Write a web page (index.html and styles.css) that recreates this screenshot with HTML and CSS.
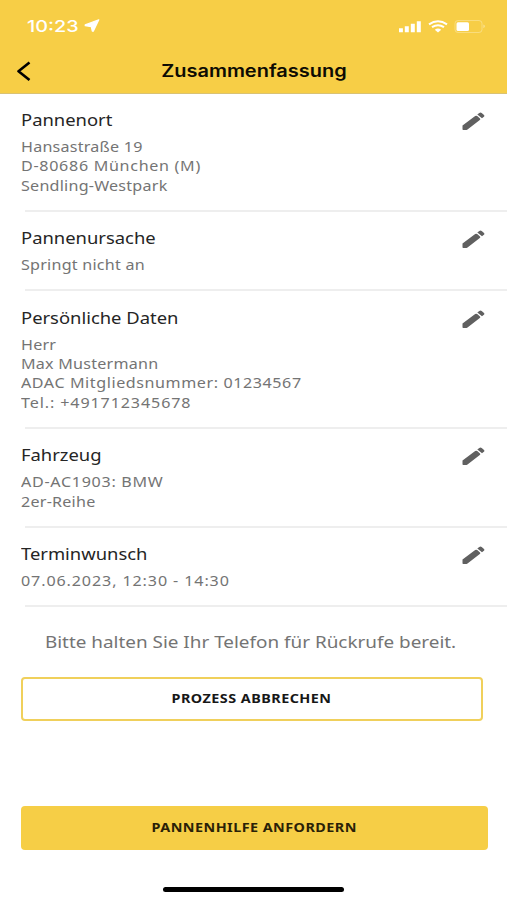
FILE: index.html
```html
<!DOCTYPE html>
<html lang="de">
<head>
<meta charset="utf-8">
<title>Zusammenfassung</title>
<link rel="stylesheet" href="styles.css">
</head>
<body>
<svg class="defs" width="0" height="0"><symbol id="pencil" viewBox="0 0 24 20"><path d="M1.500 14.600 14.200 5Q15.200 4.300 16.200 5.100L19 7.600Q19.800 8.300 18.800 9.100L6.500 18.400Q5.700 19 4.500 19H2.300Q1.500 19 1.500 18.200Z"/><path d="M16.300 3.500 18.300 2Q19.500 1.100 20.700 2L23 3.900Q24 4.800 22.900 5.700L21 7.200Z"/></symbol></svg>
<header class="top">
  <div class="status">
    <span class="time"><span class="stretch">10:23</span></span>
    <svg class="location" viewBox="0 0 16 13"><path d="M14.800.8 9.300 12.200H8.300L7.300 7.600 1.200 6.700V5.900Z"/></svg>
    <svg class="signals" viewBox="0 0 88 16"><path d="M1 10.200h3.900v4H1zM6.800 8.300h4v5.900h-4zM12.800 5.700h4v8.500h-4zM18.800 3.200h4v11h-4z"/><g fill="none" stroke="#fff" stroke-width="2"><path d="M31 6.300q9-6 18 0M34 9.200q6-4 12 0"/></g><path d="M36.800 11.700q3.200-2.200 6.400 0L40 14.500z"/><rect class="shell" x="57" y="2.500" width="27" height="12" rx="3"/><rect x="58.500" y="4.300" width="12.500" height="8.700" rx="1.500"/><path class="nub" d="M85.500 6.500q2.500 1.500 0 3.700z"/></svg>
  </div>
  <div class="nav">
    <svg class="back" viewBox="0 0 16 20"><path d="M13.500 1.500 2.500 10.300 13.500 19"/></svg>
    <h1><span class="stretch">Zusammenfassung</span></h1>
  </div>
</header>
<main>
  <section class="row"><div class="text"><h2>Pannenort</h2><p>Hansastraße 19<br><span class="code">D-80686 München (M)</span><br>Sendling-Westpark</p></div><svg class="edit"><use href="#pencil"/></svg></section>
  <section class="row"><div class="text"><h2>Pannenursache</h2><p>Springt nicht an</p></div><svg class="edit"><use href="#pencil"/></svg></section>
  <section class="row"><div class="text"><h2>Persönliche Daten</h2><p>Herr<br>Max Mustermann<br><span class="member">ADAC Mitgliedsnummer: 01234567</span><br><span class="digits">Tel.: +491712345678</span></p></div><svg class="edit"><use href="#pencil"/></svg></section>
  <section class="row"><div class="text"><h2>Fahrzeug</h2><p><span class="code">AD-AC1903: BMW</span><br>2er-Reihe</p></div><svg class="edit"><use href="#pencil"/></svg></section>
  <section class="row"><div class="text"><h2>Terminwunsch</h2><p><span class="digits">07.06.2023, 12:30 - 14:30</span></p></div><svg class="edit"><use href="#pencil"/></svg></section>
  <p class="hint"><span class="stretch">Bitte halten Sie Ihr Telefon für Rückrufe bereit.</span></p>
  <button class="cancel"><span class="stretch">PROZESS ABBRECHEN</span></button>
</main>
<footer>
  <button class="request"><span class="stretch">PANNENHILFE ANFORDERN</span></button>
  <div class="home"></div>
</footer>
</body>
</html>
```
FILE: styles.css
```css
* { box-sizing: border-box; margin: 0; padding: 0; }
body { width: 507px; height: 900px; overflow: hidden; display: flex; flex-direction: column; background: #fff; font-family: "Noto Sans", sans-serif; color: #252525; }
.defs { position: absolute; }
.stretch { display: inline-block; white-space: nowrap; transform: scaleX(1.15); }
.top { height: 94px; flex: none; background: #f7ce46; border-bottom: 1px solid #d9c273; margin-bottom: -1.300px; }
.status { height: 48px; padding: 3px 21px 0 27px; display: flex; align-items: center; color: #fff; }
.time { width: 52px; font: 500 16.500px/20px Inter, sans-serif; }
.time .stretch { transform: scaleX(1.2); transform-origin: left; }
.location { width: 16px; height: 13px; margin-left: 5px; fill: #fff; stroke: #fff; stroke-width: 1.200; stroke-linejoin: round; }
.signals { width: 88px; height: 16px; margin-left: auto; fill: #fff; }
.signals .shell { fill: none; stroke: #fff; stroke-opacity: .3; }
.signals .nub { opacity: .5; }
.nav { height: 46px; display: grid; grid-template-columns: 57px 1fr 57px; align-items: center; }
.back { width: 16px; height: 20px; margin-left: 16px; fill: none; stroke: #000; stroke-width: 2.600; stroke-linejoin: round; }
h1 { font: 600 17px/26px Inter, sans-serif; text-align: center; color: #0d0b03; }
h1 .stretch { transform: scaleX(1.175); }
.row { position: relative; display: flex; justify-content: space-between; padding: 16px 22px 16.100px 21px; }
.row::after { content: ""; position: absolute; left: 25px; right: 0; bottom: -.5px; height: 2px; background: #eee; }
.text { transform: scaleX(1.15); transform-origin: left; white-space: nowrap; }
h2 { font-size: 16px; font-weight: 400; line-height: 23px; margin-bottom: 5px; }
.row p { font-size: 14px; line-height: 19.400px; letter-spacing: .2px; color: #747474; }
.row .code { letter-spacing: .6px; }
.row .member { letter-spacing: .5px; }
.row .digits { letter-spacing: .770px; }
.edit { width: 24px; height: 20px; margin-top: 2px; fill: #606060; flex: none; }
.hint { margin-top: 23px; text-align: center; font-size: 16.500px; line-height: 24px; color: #747474; padding-right: 5px; }
.hint .stretch { transform: scaleX(1.145); }
button { display: block; height: 44px; border-radius: 4px; font: 700 12.500px/20px "Noto Sans", sans-serif; letter-spacing: .4px; color: #171717; }
.cancel { width: 462px; margin: 23px 0 0 20.500px; border: 2px solid #f0d05b; background: #fff; }
footer { margin-top: auto; height: 94px; }
.request { width: 467px; margin-left: 20.500px; border: 0; background: #f6ce46; color: #2a2107; }
.home { width: 181px; height: 5px; border-radius: 3px; background: #000; margin: 37px auto 0; }
```
